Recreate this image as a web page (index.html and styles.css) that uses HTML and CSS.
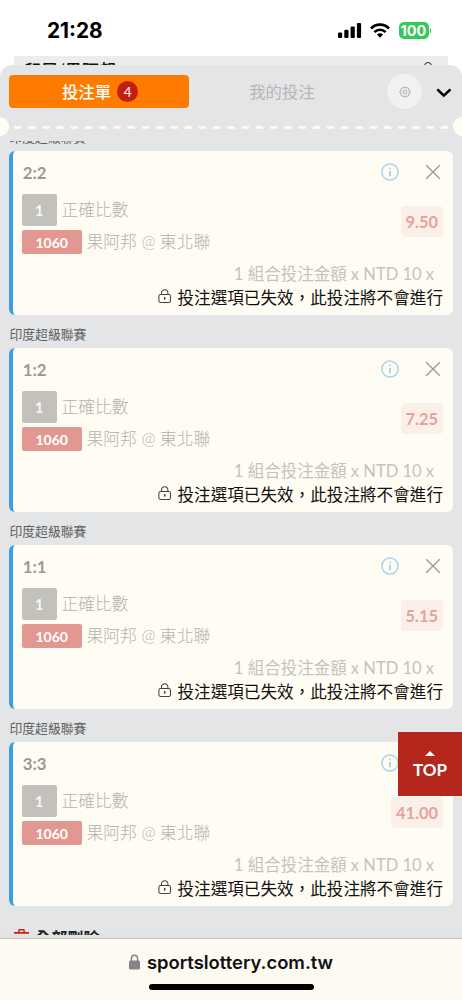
FILE: index.html
```html
<!DOCTYPE html>
<html lang="zh-Hant">
<head>
<meta charset="utf-8">
<title>投注單</title>
<link rel="stylesheet" href="styles.css">
</head>
<body>
<svg width="0" height="0" class="defs">
  <symbol id="info" viewBox="0 0 18 18"><circle cx="9" cy="9" r="8.1" fill="none" stroke="currentColor" stroke-width="1.5"/><circle cx="9" cy="5.4" r="1" fill="currentColor"/><path d="M9 8v5.2" stroke="currentColor" stroke-width="1.9"/></symbol>
  <symbol id="close" viewBox="0 0 16 16"><path d="M1.2 1.2l13.6 13.6M14.8 1.2L1.2 14.8" stroke="currentColor" stroke-width="1.3" fill="none"/></symbol>
  <symbol id="lock" viewBox="0 0 14 15"><rect x=".9" y="5.4" width="11.6" height="8.1" rx="1.8" fill="none" stroke="currentColor" stroke-width="1.05"/><path d="M3.5 5.2V4a3.2 3.2 0 0 1 6.4 0v1.2" fill="none" stroke="currentColor" stroke-width="1.05"/><circle cx="6.7" cy="9" r="1" fill="currentColor"/><path d="M6.7 9v2" stroke="currentColor" stroke-width=".9"/></symbol>
</svg>
<div class="phone">
  <header class="status">
    <span class="time">21:28</span>
    <span class="signals">
      <svg class="bars" width="24" height="16" viewBox="0 0 24 16"><rect x="0" y="9.5" width="4.2" height="5.5" rx="1.1"/><rect x="6.3" y="6.8" width="4.2" height="8.2" rx="1.1"/><rect x="12.6" y="3.5" width="4.2" height="11.5" rx="1.1"/><rect x="18.9" y="0" width="4.2" height="15" rx="1.1"/></svg>
      <svg class="wifi" width="20" height="15" viewBox="0 0 20 15"><g fill="none" stroke="#000" stroke-width="2.7"><path d="M1 5.5a12.6 12.6 0 0 1 18 0"/><path d="M4.4 9.1a7.8 7.8 0 0 1 11.2 0"/></g><path d="M6.9 11.5a4.4 4.4 0 0 1 6.2 0L10 14.7z"/></svg>
      <span class="battery">100</span><i class="cap"></i>
    </span>
  </header>
  <div class="behind"><span>印尼/果阿邦</span><i class="knob"></i></div>
  <main class="sheet">
    <nav class="tabs">
      <div class="tab active">投注單<b class="count">4</b></div>
      <div class="tab">我的投注</div>
      <div class="gear"><svg width="12" height="12" viewBox="0 0 12 12" fill="none" stroke="#999" stroke-width=".8"><path d="M5 1h2l.4 1.2 1.3-.5 1.5 1.5-.6 1.3L11 5v2l-1.4.5.6 1.3-1.5 1.5-1.3-.5L7 11H5l-.5-1.2-1.3.5-1.4-1.5.5-1.3L1 7V5l1.3-.5-.5-1.3 1.4-1.5 1.3.5z"/><circle cx="6" cy="6" r="1.9"/></svg></div>
      <svg class="chevron" width="16" height="10" viewBox="0 0 16 10"><path d="M2 2l5.8 5.6L13.8 2" fill="none" stroke="#000" stroke-width="2.5" stroke-linecap="round"/></svg>
    </nav>
    <div class="perforation"><i class="notch"></i><svg class="dashes" height="3"><path d="M0 1.5h434" stroke="#fffdf3" stroke-width="2.3" stroke-dasharray="7.2 7.03"/></svg><i class="notch right"></i></div>
    <div class="scroll">
      <div class="list">
        <h2 class="league">印度超級聯賽</h2>
        <section class="card">
          <div class="head"><b>2:2</b><svg class="info"><use href="#info"/></svg><svg class="close"><use href="#close"/></svg></div>
          <div class="body"><div class="bet"><div class="line"><span class="no">1</span>正確比數</div><div class="line"><span class="code">1060</span>果阿邦 @ 東北聯</div></div><span class="odds">9.50</span></div>
          <div class="stake">1 組合投注金額 x NTD 10 x</div>
          <div class="notice"><svg><use href="#lock"/></svg><span>投注選項已失效，此投注將不會進行</span></div>
        </section>
        <h2 class="league">印度超級聯賽</h2>
        <section class="card">
          <div class="head"><b>1:2</b><svg class="info"><use href="#info"/></svg><svg class="close"><use href="#close"/></svg></div>
          <div class="body"><div class="bet"><div class="line"><span class="no">1</span>正確比數</div><div class="line"><span class="code">1060</span>果阿邦 @ 東北聯</div></div><span class="odds">7.25</span></div>
          <div class="stake">1 組合投注金額 x NTD 10 x</div>
          <div class="notice"><svg><use href="#lock"/></svg><span>投注選項已失效，此投注將不會進行</span></div>
        </section>
        <h2 class="league">印度超級聯賽</h2>
        <section class="card">
          <div class="head"><b>1:1</b><svg class="info"><use href="#info"/></svg><svg class="close"><use href="#close"/></svg></div>
          <div class="body"><div class="bet"><div class="line"><span class="no">1</span>正確比數</div><div class="line"><span class="code">1060</span>果阿邦 @ 東北聯</div></div><span class="odds">5.15</span></div>
          <div class="stake">1 組合投注金額 x NTD 10 x</div>
          <div class="notice"><svg><use href="#lock"/></svg><span>投注選項已失效，此投注將不會進行</span></div>
        </section>
        <h2 class="league">印度超級聯賽</h2>
        <section class="card">
          <div class="head"><b>3:3</b><svg class="info"><use href="#info"/></svg><svg class="close"><use href="#close"/></svg></div>
          <div class="body"><div class="bet"><div class="line"><span class="no">1</span>正確比數</div><div class="line"><span class="code">1060</span>果阿邦 @ 東北聯</div></div><span class="odds">41.00</span></div>
          <div class="stake">1 組合投注金額 x NTD 10 x</div>
          <div class="notice"><svg><use href="#lock"/></svg><span>投注選項已失效，此投注將不會進行</span></div>
        </section>
        <div class="clear"><svg width="15" height="18" viewBox="0 0 15 18" fill="#c3211b"><path d="M0 3h4.2V1.2Q4.2 0 5.4 0h4.2q1.2 0 1.2 1.2V3H15v1.8H0zM5.6 3h3.8V1.4H5.6zM1.5 5.9h12L12.6 18H2.4z" fill-rule="evenodd"/></svg><span>全部刪除</span></div>
      </div>
    </div>
  </main>
  <footer class="browser">
    <div class="address"><svg width="11" height="16" viewBox="0 0 11 16"><rect y="6.5" width="11" height="9" rx="1.5" fill="#858585"/><path d="M2.4 7V4.3a3.1 3.1 0 0 1 6.2 0V7" fill="none" stroke="#858585" stroke-width="1.5"/></svg>sportslottery.com.tw</div>
    <i class="home"></i>
  </footer>
  <div class="top"><i></i>TOP</div>
</div>
</body>
</html>
```
FILE: styles.css
```css
* { box-sizing: border-box; }
body { margin: 0; background: #fff; font-family: Lato, "Noto Sans CJK TC", sans-serif; }
.defs { display: block; position: absolute; }
.phone { position: relative; width: 462px; height: 1000px; overflow: hidden; display: flex; flex-direction: column; }

.status { height: 56px; flex: none; display: flex; justify-content: space-between; align-items: flex-start; padding: 18px 31px 0 47px; }
.time { font: 700 20.8px/26px Inter, sans-serif; letter-spacing: 0; }
.signals { display: flex; align-items: flex-start; padding-top: 5px; }
.bars { margin-right: 8px; }
.wifi { margin-right: 9px; }
.battery { width: 30px; height: 17px; margin-top: -1px; border-radius: 5px; background: #34c759; color: #fff; font: 700 14.5px/17px Inter, sans-serif; text-align: center; letter-spacing: 0; }
.cap { width: 1.5px; height: 5px; margin: 5px 0 0 1px; border-radius: 0 2px 2px 0; background: #34c759; }

.behind { height: 9px; flex: none; margin: 0 14px; background: #ececec; overflow: hidden; display: flex; justify-content: space-between; padding: 4px 16px 0 10px; font: 500 17px/20px "Noto Sans CJK TC", sans-serif; color: #111; }
.knob { width: 8px; height: 8px; border: 1.5px solid #222; border-radius: 50%; margin-top: 2px; }

.sheet { height: 870px; flex: none; background: #e4e5e7; border-radius: 12px 12px 0 0; display: flex; flex-direction: column; }
.tabs { height: 53px; flex: none; display: flex; align-items: center; padding-left: 9px; }
.tab { width: 184px; text-align: center; font-size: 16.4px; line-height: 33px; color: #b5b5b6; font-weight: 400; }
.tab.active { width: 180px; height: 33px; margin-right: 1px; padding-left: 2px; display: flex; align-items: center; justify-content: center; gap: 6px; border-radius: 4px; background: #ff7b00; color: #fff; font-weight: 500; }
.count { width: 21px; height: 21px; border-radius: 50%; background: #c51c12; font: 400 13.5px/22px Lato, sans-serif; text-align: center; }
.gear { width: 35px; height: 35px; margin-left: 13px; border-radius: 50%; background: #f1f1f1; display: flex; align-items: center; justify-content: center; }
.chevron { margin-left: 14px; margin-top: 2px; }
.perforation { height: 19px; flex: none; margin-top: -1px; display: flex; align-items: center; }
.notch { width: 9px; height: 19px; flex: none; border-radius: 0 10px 10px 0; background: #fffdf3; }
.notch.right { border-radius: 10px 0 0 10px; }
.dashes { flex: 1; width: 0; margin: 2px 4px 0 5px; }

.scroll { flex: none; height: 794px; margin-top: 5px; overflow: hidden; padding: 0 9px; }
.list { margin-top: -23px; }
.league { height: 33px; margin: 0; padding: 10px 0 0 .5px; font: 400 12.8px/18px "Noto Sans CJK TC", sans-serif; color: #5e5f61; }
.card { height: 164px; padding: 0 10px 0 9px; border-left: 4px solid #3a9edf; border-radius: 6px; background: #fffdf3; }
.head { height: 42.5px; display: flex; align-items: center; color: #9a9993; }
.head b { font-size: 16.8px; line-height: 20px; padding: 2px 0 0 .7px; margin-right: auto; }
.info { width: 18px; height: 18px; color: #a8d3ec; margin-right: 26px; }
.close { width: 16px; height: 16px; color: #999891; margin-right: 2px; }
.body { height: 61px; display: flex; justify-content: space-between; align-items: flex-start; }
.bet { display: flex; flex-direction: column; gap: 4px; }
.line { display: flex; align-items: center; font: 300 16.8px/24px Lato, "Noto Sans CJK TC", sans-serif; color: #b3b2ac; }
.no, .code { border-radius: 2px; color: #fff; text-align: center; margin-right: 5px; font-weight: 700; }
.no { width: 34.5px; height: 32.5px; line-height: 33px; background: #c3c1bc; color: #f8f7f0; font-size: 14.5px; }
.code { width: 59.5px; height: 24px; line-height: 25px; background: #e29891; font-size: 14px; }
.odds { height: 30.5px; margin-top: 12.5px; padding: 0 5px; border-radius: 4px; background: #fbf0e9; color: #e4a49c; font-weight: 700; font-size: 16.4px; line-height: 31px; }
.stake { height: 30px; padding: 7px 9px 0 0; text-align: right; font-size: 16.5px; line-height: 25px; color: #c4c3be; font-weight: 400; }
.notice { display: flex; align-items: center; justify-content: flex-end; height: 24px; gap: 6px; font: 400 16.6px/24px "Noto Sans CJK TC", sans-serif; color: #111; }
.notice svg { width: 14px; height: 15px; color: #444; }
.clear { display: flex; align-items: flex-start; gap: 6px; padding: 19px 0 0 5px; font: 700 16.2px/24px "Noto Sans CJK TC", sans-serif; color: #222; }
.clear svg { margin-top: 4px; }

.browser { height: 65px; flex: none; border-top: 3px solid #e1e2e4; background: #fcfaf1; box-shadow: inset 0 1px #c3c3c4; display: flex; flex-direction: column; align-items: center; }
.address { height: 46px; display: flex; align-items: center; gap: 7px; padding-top: 2px; font: 600 18.4px/24px Inter, sans-serif; color: #111; }
.home { width: 165px; height: 6px; border-radius: 3px; background: #000; }
.top { position: absolute; right: 0; top: 732px; width: 64px; height: 64px; background: #b5261c; color: #fff; font-size: 17px; line-height: 20px; text-align: center; font-weight: 700; display: flex; flex-direction: column; align-items: center; padding-top: 19px; gap: 4px; }
.top i { width: 0; border: 5px solid transparent; border-top: 0; border-bottom-color: #fff; }
```
